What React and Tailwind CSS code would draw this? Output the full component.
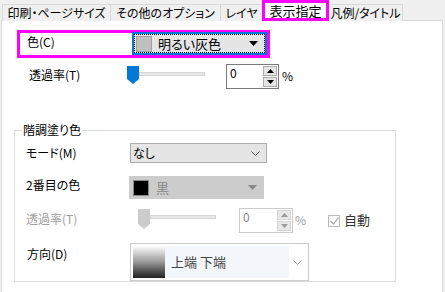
import React from 'react'

const FONT = "font-['Noto_Sans_CJK_JP',sans-serif] [font-feature-settings:'palt']"

function Tab({ label, w, selected }) {
  if (selected) {
    return (
      <div className={`relative z-10 -ml-px flex h-[21px] items-center justify-center border-[3px] border-[#ff00ff] bg-white text-[13px] text-black`} style={{ width: w }}>
        {label}
      </div>
    )
  }
  return (
    <div className="-ml-px flex h-[17px] items-center justify-center border border-b-0 border-[#d9d9d9] bg-[#f0f0f0] text-[12px] text-black" style={{ width: w }}>
      {label}
    </div>
  )
}

function Spin({ disabled }) {
  const border = disabled ? 'border-[#cccccc]' : 'border-[#7a7a7a]'
  const tri = disabled ? '#9a9a9a' : '#000'
  return (
    <div className={`flex h-[25px] border ${border} bg-white`}>
      <div className={`flex-1 pl-[3px] pt-[1px] text-[12px] leading-[14px] ${disabled ? 'text-[#8a8a8a]' : 'text-black'}`}>0</div>
      <div className="flex w-[16px] flex-col gap-px p-px">
        <div className={`flex flex-1 items-center justify-center border ${disabled ? 'border-[#d5d5d5] bg-[#e8e8e8]' : 'border-[#adadad] bg-[#e5e5e5]'}`}>
          <svg width="7" height="4" viewBox="0 0 7 4"><polygon points="3.5,0 7,4 0,4" fill={tri} /></svg>
        </div>
        <div className={`flex flex-1 items-center justify-center border ${disabled ? 'border-[#d5d5d5] bg-[#e8e8e8]' : 'border-[#adadad] bg-[#e5e5e5]'}`}>
          <svg width="7" height="4" viewBox="0 0 7 4"><polygon points="0,0 7,0 3.5,4" fill={tri} /></svg>
        </div>
      </div>
    </div>
  )
}

function Slider({ color, trackW, thumbH }) {
  return (
    <div className="flex items-start">
      <svg width="12" height={thumbH} viewBox={`0 0 12 ${thumbH}`} className="shrink-0">
        <polygon points={`0,0 12,0 12,${thumbH - 5} 6,${thumbH} 0,${thumbH - 5}`} fill={color} />
      </svg>
      <div className="mt-[6px] h-[4px] border border-[#d6d6d6] bg-[#e7e7e7]" style={{ width: trackW }} />
    </div>
  )
}

export default function App() {
  return (
    <div className={`h-[292px] w-[445px] overflow-hidden bg-[#f0f0f0] ${FONT} text-[12px] text-black`}>
      {/* tabs */}
      <div className="flex h-[21px] items-end pl-[3px]">
        <Tab label="印刷・ページサイズ" w={109} />
        <Tab label="その他のオプション" w={111} />
        <Tab label="レイヤ" w={43} />
        <Tab label="表示指定" w={67} selected />
        <Tab label="凡例/タイトル" w={75} />
      </div>

      {/* panel */}
      <div className="-mt-px ml-px h-[272px] w-[442px] border-x border-t border-[#d9d9d9] bg-white">
        {/* color row */}
        <div className="ml-[15px] mt-[9px] flex h-[28px] w-[253px] border-[3px] border-[#ff00ff]">
          <div className="w-[112px] pl-[7px] pt-[1px] leading-[16px]">色(C)</div>
          <div className="-mt-px flex h-[23px] w-[135px] items-center border-2 border-[#0078d7] bg-[#e5e5e5]">
            <div className="flex h-full flex-1 items-center border border-dotted border-black pl-[1px] pr-[6px]">
              <div className="h-[16px] w-[16px] border border-[#a0a0a0] bg-[#c0c0c0]" />
              <span className="ml-[6px] flex-1 text-[13px]">明るい灰色</span>
              <svg width="9" height="5" viewBox="0 0 9 5"><polygon points="0,0 9,0 4.5,5" fill="#000" /></svg>
            </div>
          </div>
        </div>

        {/* transparency row */}
        <div className="mt-[6px] flex h-[25px]">
          <div className="w-[125px] pl-[27px] pt-[3px] leading-[16px]">透過率(T)</div>
          <div className="mt-[2px] w-[99px]">
            <Slider color="#0078d7" trackW={66} thumbH={18} />
          </div>
          <div className="w-[53px]"><Spin /></div>
          <div className="ml-[3px] pt-[4px] leading-[16px]">%</div>
        </div>

        {/* gradient group */}
        <div className="relative ml-[12px] mt-[41px] h-[152px] w-[382px] border border-[#dcdcdc]">
          <span className="absolute -top-[9px] left-[7px] bg-white px-px leading-[16px]">階調塗り色</span>

          <div className="mt-[12px] flex h-[20px] items-center">
            <div className="w-[115px] pl-[11px]">モード(M)</div>
            <div className="flex h-[20px] w-[137px] items-center border border-[#adadad] bg-[#e5e5e5] pl-[2px] pr-[6px]">
              <span className="flex-1">なし</span>
              <svg width="9" height="5" viewBox="0 0 9 5"><polyline points="0.5,0.5 4.5,4.5 8.5,0.5" fill="none" stroke="#555" strokeWidth="1" /></svg>
            </div>
          </div>

          <div className="mt-[13px] flex h-[23px]">
            <div className="w-[114px] pl-[11px] pt-[1px] leading-[16px]">2番目の色</div>
            <div className="flex h-[23px] w-[135px] items-center bg-[#cccccc] pl-[4px] pr-[7px]">
              <div className="h-[16px] w-[16px] border border-[#888] bg-black" />
              <span className="ml-[7px] flex-1 text-[13px] text-[#888]">黒</span>
              <svg width="9" height="5" viewBox="0 0 9 5"><polygon points="0,0 9,0 4.5,5" fill="#888" /></svg>
            </div>
          </div>

          <div className="mt-[9px] flex h-[25px]">
            <div className="w-[123px] pl-[11px] pt-[3px] leading-[16px] text-[#a0a0a0]">透過率(T)</div>
            <div className="mt-px w-[101px]">
              <Slider color="#cccccc" trackW={66} thumbH={20} />
            </div>
            <div className="w-[54px]"><Spin disabled /></div>
            <div className="ml-[2px] pt-[4px] leading-[16px] text-[#a0a0a0]">%</div>
            <div className="ml-[22px] mt-[7px] flex h-[12px] w-[12px] items-center justify-center border border-[#bcbcbc] bg-white">
              <svg width="9" height="8" viewBox="0 0 9 8"><polyline points="0.5,4 3.5,7 8.5,0.5" fill="none" stroke="#a8a8a8" strokeWidth="1.2" /></svg>
            </div>
            <div className="ml-[4px] pt-[4px] text-[13px] leading-[16px] text-[#333]">自動</div>
          </div>

          <div className="mt-[10px] flex h-[37px]">
            <div className="w-[115px] pl-[12px] pt-[3px] leading-[16px]">方向(D)</div>
            <div className="flex h-[38px] w-[179px] items-center border border-[#cccccc] bg-white p-[2px]">
              <div className="flex h-full w-[156px] items-center bg-[#f3f6fb]">
                <div className="h-full w-[32px] bg-gradient-to-b from-white via-[#9a9a9a] to-[#222]" />
                <span className="ml-[6px] text-[13px] text-[#444]">上端 下端</span>
              </div>
              <div className="flex flex-1 items-center justify-center">
                <svg width="9" height="5" viewBox="0 0 9 5"><polyline points="0.5,0.5 4.5,4.5 8.5,0.5" fill="none" stroke="#aaa" strokeWidth="1" /></svg>
              </div>
            </div>
          </div>
        </div>
      </div>
    </div>
  )
}
